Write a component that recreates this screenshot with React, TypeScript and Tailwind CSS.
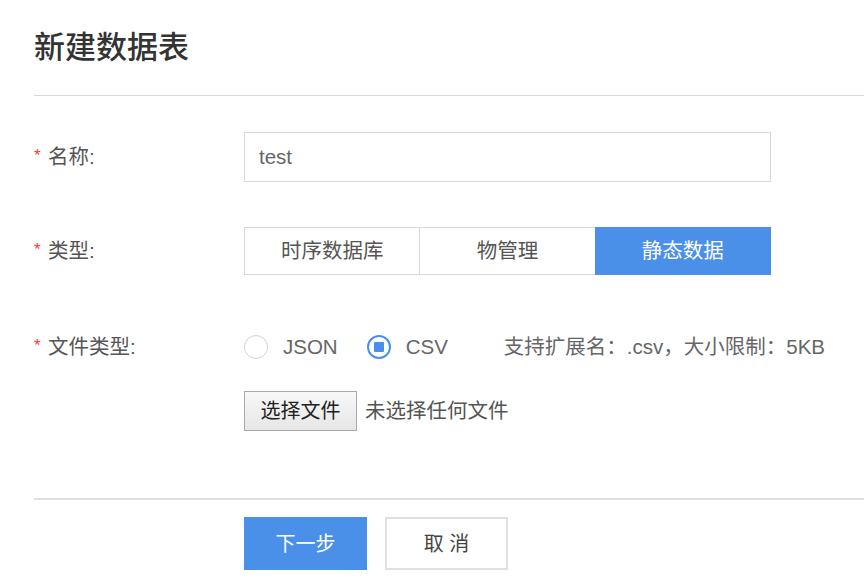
import { clsx } from "clsx";

const font = "font-['Liberation_Sans','Noto_Sans_CJK_SC',sans-serif]";

function Label({ text }: { text: string }) {
  return (
    <div className="flex w-[210px] shrink-0 items-center text-[20.5px] text-[#555]">
      <span className="-mt-[3px] w-[14px] text-[17px] leading-none text-[#f04134]">*</span>
      <span>{text}</span>
    </div>
  );
}

function Radio({ checked, label }: { checked?: boolean; label: string }) {
  return (
    <label className="flex items-center gap-[15px]">
      <span
        className={clsx(
          "grid h-[24px] w-[24px] place-items-center rounded-full border bg-white",
          checked ? "border-2 border-[#4a90e8]" : "border-[#d4d4d4]",
        )}
      >
        {checked && <span className="h-[10px] w-[10px] rounded-[1px] bg-[#4a90e8]" />}
      </span>
      <span className="text-[20.5px] text-[#666]">{label}</span>
    </label>
  );
}

export default function App() {
  const types = ["时序数据库", "物管理", "静态数据"];
  const active = 2;

  return (
    <div className={clsx("h-[585px] w-[864px] overflow-hidden bg-white", font)}>
      <div className="ml-[34px] flex h-[96px] items-center border-b border-[#d9d9d9]">
        <h1 className="text-[31px] font-medium leading-none text-[#333]">新建数据表</h1>
      </div>

      <div className="pl-[34px]">
        <div className="mt-[36px] flex h-[50px] items-center">
          <Label text="名称:" />
          <div className="flex h-[50px] w-[527px] items-center border border-[#d9d9d9] px-[14px] text-[20.5px] text-[#666]">
            test
          </div>
        </div>

        <div className="mt-[45px] flex h-[48px] items-center">
          <Label text="类型:" />
          <div className="flex h-[48px] w-[527px]">
            {types.map((t, i) => (
              <div
                key={t}
                className={clsx(
                  "flex flex-1 items-center justify-center border text-[20.5px]",
                  i > 0 && "-ml-px",
                  i === active
                    ? "border-[#4a90e8] bg-[#4a90e8] text-white"
                    : "border-[#d9d9d9] text-[#555]",
                )}
              >
                {t}
              </div>
            ))}
          </div>
        </div>

        <div className="mt-[59px] flex h-[26px] items-center">
          <Label text="文件类型:" />
          <div className="flex items-center gap-[29px]">
            <Radio label="JSON" />
            <Radio checked label="CSV" />
            <span className="ml-[27px] text-[20.5px] text-[#666]">支持扩展名：.csv，大小限制：5KB</span>
          </div>
        </div>

        <div className="mt-[31px] flex h-[40px] items-center pl-[210px]">
          <button className="h-[40px] w-[113px] border border-[#aaa] bg-gradient-to-b from-[#f8f8f8] to-[#e6e6e6] text-[20px] text-[#222]">
            选择文件
          </button>
          <span className="ml-[8px] text-[20.5px] text-[#555]">未选择任何文件</span>
        </div>
      </div>

      <div className="ml-[34px] mt-[67px] border-t-2 border-[#e0e0e0]" />

      <div className="mt-[17px] flex gap-[18px] pl-[244px]">
        <button className="h-[53px] w-[123px] bg-[#4a90e8] text-[20px] text-white">下一步</button>
        <button className="h-[53px] w-[123px] border-2 border-[#e0e0e0] bg-white text-[20px] text-[#444]">
          取 消
        </button>
      </div>
    </div>
  );
}
